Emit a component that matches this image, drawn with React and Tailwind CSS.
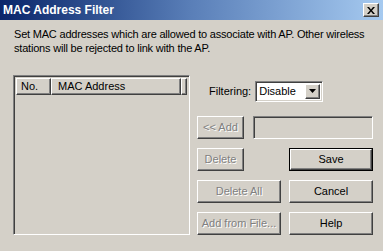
import React from "react";

const raised =
  "border border-t-white border-l-white border-b-[#404040] border-r-[#404040] shadow-[inset_-1px_-1px_0_#808080]";
const sunken =
  "border border-t-[#808080] border-l-[#808080] border-b-white border-r-white shadow-[inset_1px_1px_0_#404040,inset_-1px_-1px_0_#d4d0c8]";
const disabledText = "text-[#808080] [text-shadow:1px_1px_0_#ffffff]";

function Btn({ children, disabled, className = "" }) {
  return (
    <div
      className={`${raised} h-[23px] flex items-center justify-center bg-[#d4d0c8] ${
        disabled ? disabledText : "text-black"
      } ${className}`}
    >
      {children}
    </div>
  );
}

export default function App() {
  return (
    <div className="w-[383px] h-[251px] overflow-hidden bg-[#d4d0c8] font-['Liberation_Sans',Arial,sans-serif] text-[11px] text-black">
      <div className="h-[20px] flex items-center pl-[3px] pr-[4px] bg-gradient-to-r from-[#0a246a] via-[#5a7fb8] to-[#a6caf0]">
        <span className="text-white font-bold text-[12px] leading-none">MAC Address Filter</span>
        <div className={`${raised} ml-auto w-[16px] h-[14px] bg-[#d4d0c8] flex items-center justify-center`}>
          <svg width="8" height="7" viewBox="0 0 8 7">
            <path d="M0 0h2l2 2.5L6 0h2L5 3.5 8 7H6L4 4.5 2 7H0l3-3.5z" fill="#000" />
          </svg>
        </div>
      </div>
      <div className="pl-[14px] pt-[7px] leading-[14px] tracking-[-0.2px]">
        Set MAC addresses which are allowed to associate with AP. Other wireless
        <br />
        stations will be rejected to link with the AP.
      </div>
      <div className="flex mt-[20px] pl-[13px]">
        <div className={`${sunken} w-[177px] h-[160px] p-[2px] bg-[#d4d0c8]`}>
          <div className="flex h-[17px]">
            <div className={`${raised} w-[35px] pl-[4px] flex items-center`}>No.</div>
            <div className={`${raised} w-[130px] pl-[6px] flex items-center`}>MAC Address</div>
            <div className={`${raised} flex-1`}></div>
          </div>
        </div>
        <div className="ml-[7px] w-[176px] flex flex-col">
          <div className="mt-[6px] h-[20px] flex items-center">
            <span className="ml-[12px]">Filtering:</span>
            <div className={`${sunken} ml-[4px] w-[68px] h-[21px] bg-white flex items-center pl-[3px] pr-[2px]`}>
              <span className="flex-1">Disable</span>
              <div className={`${raised} w-[15px] h-[15px] bg-[#d4d0c8] flex items-center justify-center`}>
                <svg width="7" height="4" viewBox="0 0 7 4">
                  <path d="M0 0h7L3.5 4z" fill="#000" />
                </svg>
              </div>
            </div>
          </div>
          <div className="mt-[15px] flex">
            <Btn disabled className="w-[47px]">&lt;&lt; Add</Btn>
            <div className={`${sunken} ml-[9px] w-[120px] h-[23px] bg-[#d4d0c8]`}></div>
          </div>
          <div className="mt-[9px] flex">
            <Btn disabled className="w-[47px]">Delete</Btn>
            <div className="ml-auto w-[84px] h-[23px] border border-black">
              <Btn className="w-full h-full">Save</Btn>
            </div>
          </div>
          <div className="mt-[9px] flex">
            <Btn disabled className="w-[84px]">Delete All</Btn>
            <Btn className="ml-auto w-[84px]">Cancel</Btn>
          </div>
          <div className="mt-[9px] flex">
            <Btn disabled className="w-[84px]">Add from File...</Btn>
            <Btn className="ml-auto w-[84px]">Help</Btn>
          </div>
        </div>
      </div>
    </div>
  );
}
